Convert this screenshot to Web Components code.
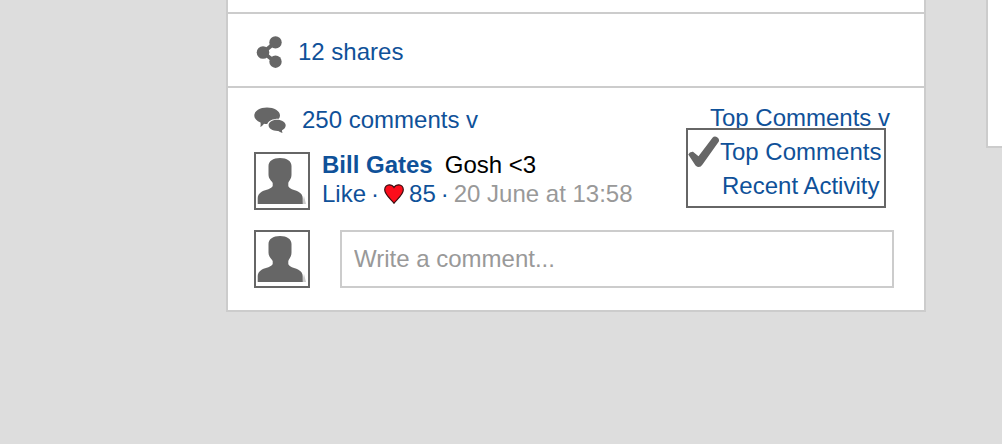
<!DOCTYPE html>
<html lang="en">
<head>
<meta charset="utf-8">
<title>Post comments</title>
<style>
  :root { --link: #0f5199; --line: #ccc; --icon: #666; --muted: #999; }
  body { margin: 0; min-height: 100vh; background: #ddd; color: #000; font: 24px/28px "Liberation Sans", Arial, sans-serif; }
</style>
</head>
<body>
<feed-layout>
  <post-card>
    <share-bar count="12"></share-bar>
    <comment-section>
      <comment-count slot="title" count="250"></comment-count>
      <sort-menu slot="sort"></sort-menu>
      <comment-item author="Bill Gates" likes="85" date="20 June at 13:58">Gosh &lt;3</comment-item>
      <comment-form></comment-form>
    </comment-section>
  </post-card>
  <side-card slot="side"></side-card>
</feed-layout>
<script>
const base = `<style>
  *, *::before { box-sizing: border-box; }
  :host { display: block; box-sizing: border-box; }
  a { color: var(--link); text-decoration: none; }
  button, input { font: inherit; margin: 0; }
  button { color: var(--link); background: none; border: 0; padding: 0; cursor: pointer; white-space: nowrap; }
  svg { display: block; flex: none; fill: var(--icon); }
</style>`;

function define(name, render) {
  customElements.define(name, class extends HTMLElement {
    connectedCallback() {
      if (this.shadowRoot) return;
      const t = document.createElement('template');
      t.innerHTML = base + render(this);
      this.attachShadow({ mode: 'open' }).append(t.content.cloneNode(true));
    }
  });
}

define('feed-layout', () => `<style>
  :host { display: grid; grid-template-columns: minmax(0, 1fr) 16px; column-gap: 60px; align-items: start; padding-left: 226px; }
</style><main><slot></slot></main><aside><slot name="side"></slot></aside>`);

define('post-card', () => `<style>
  :host { background: #fff; border: 2px solid var(--line); border-top: 0; padding-top: 12px; }
</style><slot></slot>`);

define('side-card', () => `<style>
  :host { height: 148px; background: #fff; border: solid var(--line); border-width: 0 0 2px 2px; }
</style>`);

define('share-bar', el => `<style>
  :host { border: solid var(--line); border-width: 2px 0; padding: 24px 28px 20px; }
  div { display: flex; align-items: center; gap: 16px; height: 28px; }
</style><div>
  <svg width="26" height="32" viewBox="0 0 26 32" aria-hidden="true"><path d="M7 16.500 19.500 6.200M7 16.500 19.500 26" stroke="#666" stroke-width="4"/><circle cx="7" cy="16.500" r="6.300"/><circle cx="19.500" cy="6.400" r="6.200"/><circle cx="19.500" cy="25.700" r="6.200"/></svg>
  <a href="#shares">${el.getAttribute('count')} shares</a></div>`);

define('comment-section', () => `<style>
  :host { padding: 18px 30px 22px 26px; }
  header { display: flex; justify-content: space-between; align-items: flex-start; margin-bottom: 18px; }
  section { display: grid; gap: 20px; }
</style><header><slot name="title"></slot><slot name="sort"></slot></header><section><slot></slot></section>`);

define('comment-count', el => `<style>
  :host { display: flex; align-items: center; gap: 16px; }
</style>
  <svg width="32" height="26" viewBox="0 0 32 26" aria-hidden="true"><path d="M13 .5C20 .5 26 3.800 26 8.500 26 9.700 25.600 10.800 24.800 11.800 19 11.700 14 14 13.300 17 12 17.100 11 17 10 16.700 9 18.200 7.500 19.500 6.300 19.900 6.800 18.500 6.700 17 6.500 15.600 2.700 14.100.3 11.500.3 8.500.3 3.800 6 .5 13 .5Z"/><path d="M23 12.700C28 12.700 31.700 15.200 31.700 18.300 31.700 20.600 30.300 22.300 28 23.300 28 24.400 28.200 25.300 28.500 25.900 26.500 25.500 25.300 24.700 24.300 24 18.700 24.200 14.600 21.700 14.600 18.300 14.600 15.200 18 12.700 23 12.700Z"/></svg>
  <a href="#comments">${el.getAttribute('count')} comments v</a>`);

define('sort-menu', () => `<style>
  :host { position: relative; line-height: 24px; padding-right: 4px; }
  .current { display: block; line-height: inherit; }
  .menu { position: absolute; z-index: 1; top: 22px; right: 8px; width: 200px; padding: 5px 0 3px; border: 2px solid var(--icon); background: #fff; }
  .menu button { display: flex; align-items: center; width: 100%; height: 34px; line-height: 34px; padding-left: 34px; }
  .menu button.selected { padding-left: 0; }
</style>
<button class="current" aria-haspopup="true" aria-expanded="true">Top Comments v</button>
<div class="menu" role="menu">
  <button class="selected" role="menuitemradio" aria-checked="true"><svg width="32" height="32" viewBox="0 0 32 32" aria-hidden="true"><path d="M.3 18.500Q1.500 15.500 5 15.800L10.500 20.200 24.500 1.800Q26.500-.5 29.500 1.500 32 3.500 30.500 6L14.500 28.500Q11.500 33 7.500 29.500Z"/></svg>Top Comments</button>
  <button role="menuitemradio" aria-checked="false">Recent Activity</button>
</div>`);

define('user-avatar', () => `<style>
  :host { width: 56px; height: 58px; flex: none; border: 2px solid var(--icon); background: #fff; }
</style>
  <svg width="52" height="54" viewBox="0 0 52 54" role="img" aria-label="User"><path d="M48 42 50 50H46Z" fill="#ccc"/><path d="M24 4C31 4 35.500 7 35.500 12V20.500C35.500 25 33 26.500 32.300 29V32C33 35 38 35.500 42 37.500 45.500 39.500 46.700 41.500 46.700 44V50H1.700V44C1.700 41.500 3 39.500 6 37.500 10 35.500 15.500 35 16.700 32V29C15.500 26.500 12.500 25 12.500 20.500V12C12.500 7 17 4 24 4Z"/></svg>`);

define('comment-item', el => `<style>
  :host { display: flex; gap: 12px; height: 58px; white-space: nowrap; }
  .text { display: flex; gap: 12px; line-height: 26px; }
  .author { font-weight: bold; }
  .meta { display: flex; align-items: center; gap: 5px; line-height: 32px; color: var(--link); }
  .date { color: var(--muted); }
</style>
<user-avatar></user-avatar>
<article>
  <div class="text"><a class="author" href="#profile">${el.getAttribute('author')}</a><span><slot></slot></span></div>
  <div class="meta"><a href="#like">Like</a><span>·</span>
    <svg width="20" height="20" viewBox="0 0 20 20" aria-hidden="true"><path d="M10 19.300C8 16 .7 11 .7 5.800.7 2.700 2.800.8 5.200.8 7.500.8 9.200 2 10 3.500 10.800 2 12.500.8 14.800.8 17.200.8 19.300 2.700 19.300 5.800 19.300 11 12 16 10 19.300Z" fill="#fc0d1b" stroke="#3b1012" stroke-width="1.200"/></svg>
    <a href="#likes">${el.getAttribute('likes')}</a><span>·</span><a class="date" href="#comment">${el.getAttribute('date')}</a></div>
</article>`);

define('comment-form', () => `<style>
  form { display: flex; gap: 30px; }
  input { flex: 1; min-width: 0; height: 58px; padding: 0 12px; border: 2px solid var(--line); border-radius: 0; background: #fff; color: #000; outline: 0; }
  input::placeholder { color: var(--muted); opacity: 1; }
</style>
<form><user-avatar></user-avatar><input type="text" aria-label="Write a comment" placeholder="Write a comment..."></form>`);
</script>
</body>
</html>
